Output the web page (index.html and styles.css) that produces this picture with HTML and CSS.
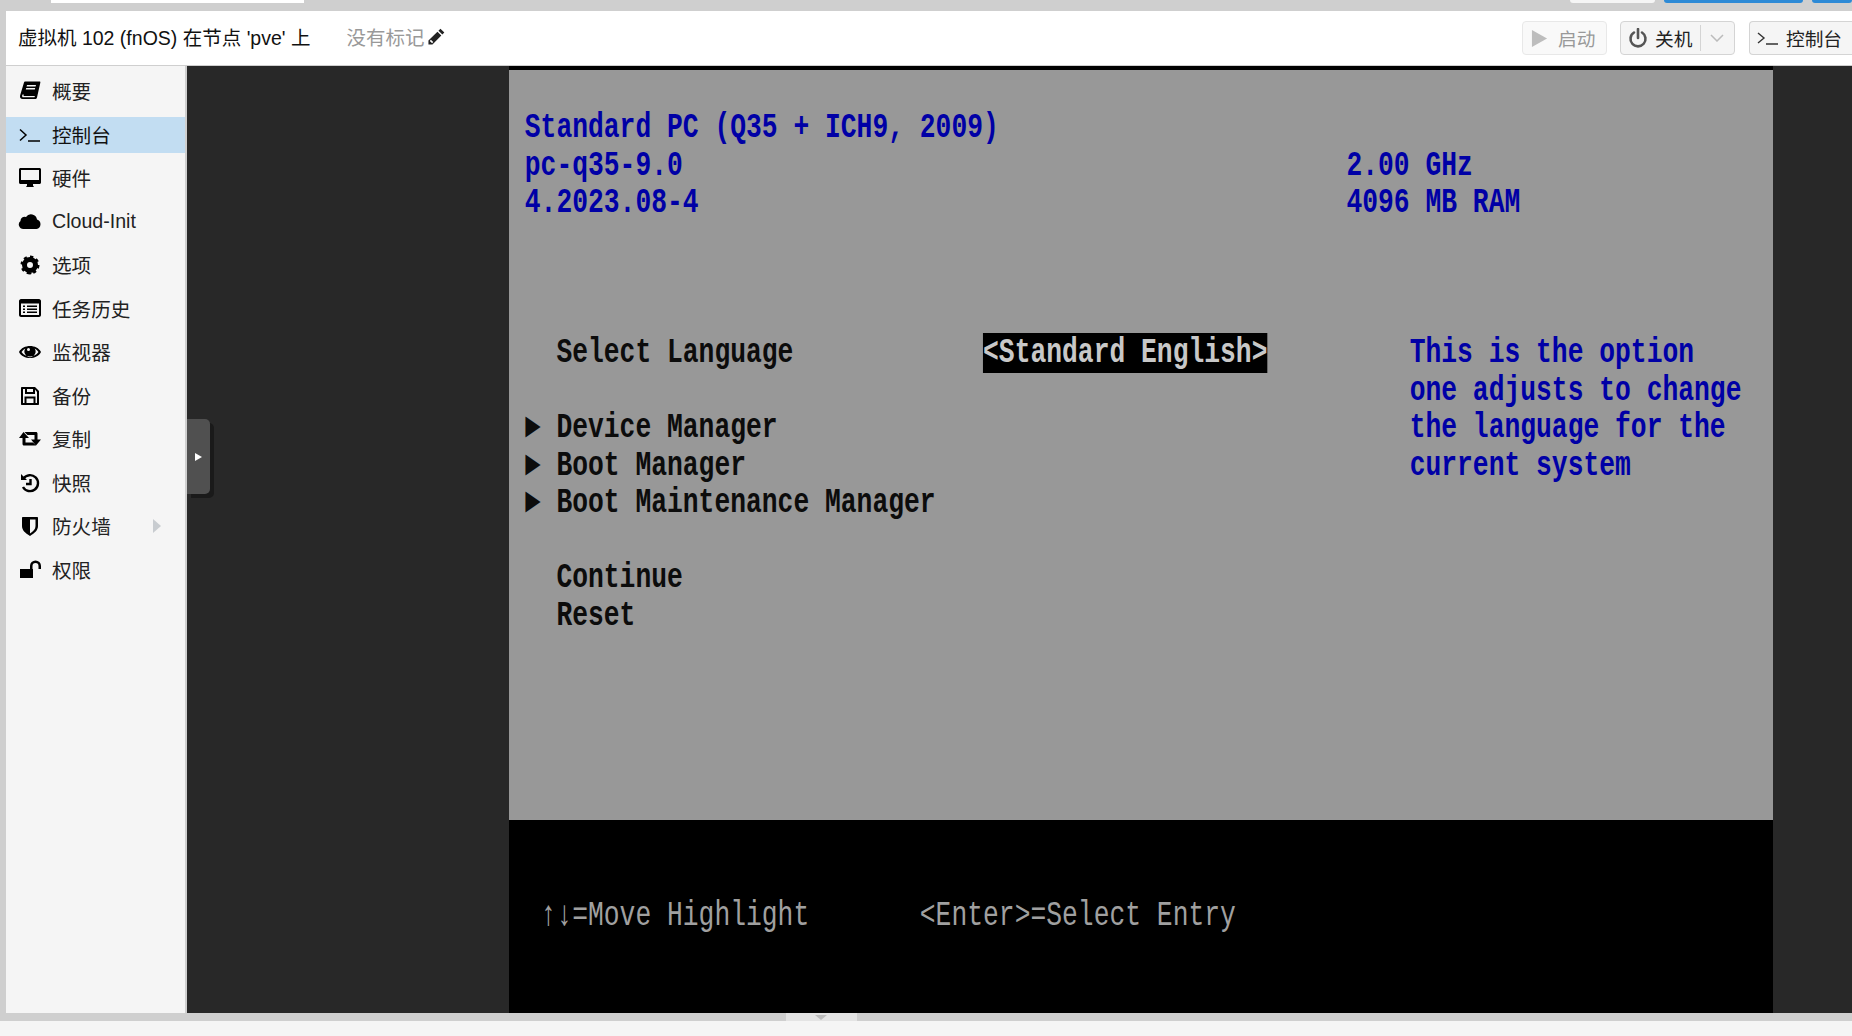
FILE: index.html
```html
<!DOCTYPE html>
<html lang="zh">
<head>
<meta charset="utf-8">
<title>虚拟机 102 (fnOS)</title>
<link rel="stylesheet" href="styles.css">
</head>
<body>
<div class="app">
  <div class="topstrip">
    <div class="tab"></div>
    <div class="strip-right">
      <div class="strip-btn strip-white"></div>
      <div class="strip-btn strip-blue"></div>
      <div class="strip-btn strip-blue2"></div>
    </div>
  </div>
  <div class="panel">
    <header class="head">
      <div class="title">虚拟机 102 (fnOS) 在节点 'pve' 上</div>
      <div class="tags">没有标记<svg class="pencil" viewBox="0 0 18 18"><path d="M13 1.500l3.500 3.500-1.800 1.800-3.500-3.500zM10.300 4.200l3.500 3.500-8 8H2.200v-3.500zM3.400 12.500l2.100 2.100 1-1-2.100-2.100z" fill-rule="evenodd"/></svg></div>
      <div class="spacer"></div>
      <div class="btn btn-off"><svg class="ic-play" viewBox="0 0 18 18"><path d="M1 0l16 9-16 9z"/></svg><span>启动</span></div>
      <div class="btn btn-split"><svg class="ic-power" viewBox="0 0 20 20"><path d="M6 4.500a7.500 7.500 0 1 0 8 0" /><path d="M10 1v9"/></svg><span>关机</span><i class="sep"></i><svg class="ic-chev" viewBox="0 0 14 8"><path d="M1 1l6 6 6-6"/></svg></div>
      <div class="btn btn-last"><svg class="ic-term" viewBox="0 0 24 24"><path d="M2 7l6 5-6 5M10 18h12"/></svg><span>控制台</span></div>
    </header>
    <div class="body">
      <nav class="side">
        <div class="item"><svg class="ic" viewBox="0 0 24 24"><path fill-rule="evenodd" d="M7 2.500h14.500c.8 0 1 .6.8 1.200L19 18.500c-.3 1-1 1.500-2 1.500H4.500C3 20 2 19 2 17.500c0-.6.100-1.200.3-1.800L6 3.500c.2-.6.500-1 1-1zM9 6l-.4 1.500h9L18 6zM8.200 9l-.4 1.500h9l.4-1.500zM4.800 15.500c-.8 0-1 2.800.2 2.800h11.500l.4-1.300H6c-.6 0-.6-1.500 0-1.500z"/></svg><span>概要</span></div>
        <div class="item active"><svg class="ic ic-line" viewBox="0 0 24 24"><path d="M2 6.500l6 5.500-6 5.500M10 18h12"/></svg><span>控制台</span></div>
        <div class="item"><svg class="ic" viewBox="0 0 24 24"><path fill-rule="evenodd" d="M2.500 2h19c.8 0 1.500.7 1.500 1.500v13c0 .8-.7 1.500-1.500 1.500H15v1.500l1 1.500H8l1-1.500V18H2.500C1.700 18 1 17.300 1 16.500v-13C1 2.700 1.700 2 2.500 2zM3 4v10h18V4z"/></svg><span>硬件</span></div>
        <div class="item"><svg class="ic" viewBox="0 0 24 24"><path d="M5.500 19A4.500 4.500 0 0 1 2.500 11 4 4 0 0 1 8 7 6 6 0 0 1 19 9.500 4.900 4.900 0 0 1 18.500 19Z"/></svg><span>Cloud-Init</span></div>
        <div class="item"><svg class="ic ic-gear" viewBox="0 0 24 24"><circle class="g1" cx="12" cy="12" r="5.500"/><circle class="g2" cx="12" cy="12" r="7.500" pathLength="16"/></svg><span>选项</span></div>
        <div class="item"><svg class="ic" viewBox="0 0 24 24"><path fill-rule="evenodd" d="M3 2h18c1 0 2 1 2 2v14c0 1-1 2-2 2H3c-1 0-2-1-2-2V4c0-1 1-2 2-2zM3 6.500V18h18V6.500zM5 8.500h2V10H5zM9 8.500h10V10H9zM5 11.500h2V13H5zM9 11.500h10V13H9zM5 14.500h2V16H5zM9 14.500h10V16H9z"/></svg><span>任务历史</span></div>
        <div class="item"><svg class="ic" viewBox="0 0 24 24"><path fill-rule="evenodd" d="M1 12C5 4 19 4 23 12 19 20 5 20 1 12zM3.500 12c2 2.800 5 4.500 8.500 4.500s6.500-1.700 8.500-4.500c-1-1.400-2.300-2.600-3.800-3.400a5.500 5.500 0 1 1-9.400 0C5.800 9.400 4.500 10.600 3.500 12zM10.500 8a1.500 1.500 0 1 0 0 3 1.500 1.500 0 0 0 0-3z"/></svg><span>监视器</span></div>
        <div class="item"><svg class="ic" viewBox="0 0 24 24"><path fill-rule="evenodd" d="M4 3h13l4 4v13c0 .6-.4 1-1 1H4c-.6 0-1-.4-1-1V4c0-.6.400-1 1-1zM5 5v14h1.500v-6.500h11V19H19V8l-2-2.500V10H7V5zM8.500 14.500V19h7v-4.500zM9 5v3h6V5z"/></svg><span>备份</span></div>
        <div class="item"><svg class="ic" viewBox="0 0 24 24"><path d="M5.500 5l5.500 6H7.500v4.500H15l3 3H6c-.8 0-1.500-.7-1.500-1.500v-6H1zM6.500 5H18c.8 0 1.500.7 1.500 1.500V12.500H23l-5 6-5-6h3.500V8H9.500z"/></svg><span>复制</span></div>
        <div class="item"><svg class="ic ic-hist" viewBox="0 0 24 24"><path d="M5.500 7.500A8 8 0 1 1 5 16"/><path d="M12.500 8v5H8"/><path class="fill" d="M3 3l6 6H3z"/></svg><span>快照</span></div>
        <div class="item has-arrow"><svg class="ic" viewBox="0 0 24 24"><path fill-rule="evenodd" d="M5 3h14c.6 0 1 .4 1 1v8c0 4-3 7-8 10-5-3-8-6-8-10V4c0-.6.400-1 1-1zM12 5.500v14c3.500-2.200 5.500-4.500 5.500-7.500V5.500z"/></svg><span>防火墙</span><i class="more"></i></div>
        <div class="item"><svg class="ic" viewBox="0 0 24 24"><path fill-rule="evenodd" d="M2 11h10V8a5.500 5.500 0 0 1 11 0v3h-2.500V8a3 3 0 0 0-6 0v3h.5v9H2z"/></svg><span>权限</span></div>
      </nav>
      <main class="view">
        <div class="handle"><i class="handle-arrow"></i></div>
        <div class="screen">
          <div class="upper"></div>
          <pre class="term"><span class="bl"> Standard PC (Q35 + ICH9, 2009)</span>
<span class="bl"> pc-q35-9.0                                          2.00 GHz</span>
<span class="bl"> 4.2023.08-4                                         4096 MB RAM</span>



   Select Language            <span class="hl">&lt;Standard English&gt;</span>         <span class="bl">This is the option</span>
                                                         <span class="bl">one adjusts to change</span>
 ► Device Manager                                        <span class="bl">the language for the</span>
 ► Boot Manager                                          <span class="bl">current system</span>
 ► Boot Maintenance Manager

   Continue
   Reset







<span class="gr">  ↑↓=Move Highlight       &lt;Enter&gt;=Select Entry</span></pre>
        </div>
      </main>
    </div>
  </div>
  <div class="splitter"><div class="splitter-tab"><i class="splitter-arrow"></i></div></div>
  <div class="bottom"></div>
</div>
</body>
</html>
```
FILE: styles.css
```css
* { box-sizing: border-box; }
html, body { margin: 0; height: 100%; overflow: hidden; }
body {
  background: #cfcfcf;
  font-family: "Liberation Sans", "Noto Sans CJK SC", sans-serif;
  color: #000;
}
.app { display: flex; flex-direction: column; height: 1036px; }

.topstrip { height: 11px; display: flex; flex: none; padding-left: 51px; }
.tab { width: 253px; height: 3px; background: #fff; }
.strip-right { margin-left: auto; display: flex; gap: 9px; }
.strip-btn { height: 3px; border-radius: 0 0 3px 3px; }
.strip-white { width: 85px; background: #f5f5f5; }
.strip-blue { width: 139px; background: #2d8ad6; }
.strip-blue2 { width: 40px; background: #2d8ad6; }

.panel { flex: 1; min-height: 0; margin-left: 6px; display: flex; flex-direction: column; }

.head {
  height: 55px; flex: none; background: #fff; border-bottom: 1px solid #cfcfcf;
  display: flex; align-items: center; padding: 0 0 0 12px;
  font-size: 19.500px;
}
.title { color: #111; white-space: nowrap; margin-top: -3px; }
.tags { margin-left: 36px; color: #999; display: flex; align-items: center; white-space: nowrap; margin-top: -3px; }
.pencil { width: 20px; height: 20px; margin-left: 2px; fill: #222; }
.spacer { flex: 1; }

.btn {
  height: 34px; display: flex; align-items: center; border: 1px solid #d4d4d4;
  border-radius: 4px; background: #f5f5f5; white-space: nowrap; margin-top: 0; font-size: 18.700px;
}
.btn span { margin-top: -2px; margin-left: -1px; }
.btn-off { width: 85px; padding-left: 8px; background: #f9f9f9; border-color: #e8e8e8; color: #999; margin-right: 13px; }
.ic-play { width: 17px; height: 17px; fill: #bdbdbd; margin-right: 11px; }
.btn-split { width: 115px; padding-left: 7px; margin-right: 14px; color: #222; }
.ic-power { width: 20px; height: 20px; fill: none; stroke: #555; stroke-width: 2.600; stroke-linecap: round; margin-right: 8px; }
.sep { width: 1px; height: 26px; background: #d4d4d4; margin: 0 9px 0 8px; }
.ic-chev { width: 14px; height: 8px; fill: none; stroke: #bbb; stroke-width: 1.500; }
.btn-last { width: 103px; padding-left: 6px; color: #222; border-right: 0; border-radius: 4px 0 0 4px; }
.ic-term { width: 24px; height: 24px; fill: none; stroke: #333; stroke-width: 1.400; margin-right: 7px; }

.body { flex: 1; min-height: 0; display: flex; }

.side {
  width: 181px; flex: none; background: #f5f5f5; border-right: 2px solid #cfcfcf;
  padding-top: 7px; display: flex; flex-direction: column; gap: 7.500px;
  font-size: 19.600px;
}
.item { height: 36px; flex: none; display: flex; align-items: center; padding-left: 12px; color: #222; white-space: nowrap; }
.item.active { background: #c2ddf2; color: #111; }
.item span { margin-left: 10px; margin-top: -1px; }
.ic { width: 24px; height: 24px; flex: none; fill: #000; }
.ic-line { fill: none; stroke: #000; stroke-width: 1.500; }
.ic-gear { fill: none; }
.g1 { fill: none; stroke: #000; stroke-width: 5; }
.g2 { fill: none; stroke: #000; stroke-width: 4; stroke-dasharray: 1 1; }
.ic-hist { fill: none; stroke: #000; stroke-width: 2.400; }
.ic-hist .fill { fill: #000; stroke: none; }
.more {
  width: 0; height: 0; margin-left: 42px;
  border-left: 8px solid #c8ccd0; border-top: 7px solid transparent; border-bottom: 7px solid transparent;
}

.view { flex: 1; min-width: 0; background: #282828; position: relative; overflow: hidden; display: flex; justify-content: center; }
.handle {
  position: absolute; left: 0; top: 353px; width: 23px; height: 75px;
  background: #505050; border-radius: 0 5px 5px 0; box-shadow: 4px 4px 0 #1a1a1a;
  display: flex; align-items: center; justify-content: center;
}
.handle-arrow { width: 0; height: 0; border-left: 7px solid #fff; border-top: 4px solid transparent; border-bottom: 4px solid transparent; }

.screen {
  position: absolute; left: 322px; top: 0; width: 1264px; height: 947px;
  background: #000; overflow: hidden;
}
.upper { position: absolute; left: 0; right: 0; top: 4px; height: 750px; background: #989898; }
.term {
  position: relative; margin: 0 0 0 -.5px; padding-top: 44px; width: 1680px;
  transform: scaleX(.7523); transform-origin: left top;
  font-family: "Liberation Mono", monospace; font-weight: 700; font-size: 35px; line-height: 37.500px;
  color: #0c0c0c; white-space: pre;
}
.bl { color: #0000a6; }
.hl { background: #000; color: #c8c8c8; }
.gr { color: #a0a0a0; font-weight: 400; }

.splitter { height: 8px; flex: none; background: #cfcfcf; display: flex; justify-content: center; padding-right: 210px; }
.splitter-tab { width: 71px; background: #e4e4e4; display: flex; justify-content: center; }
.splitter-arrow { width: 0; height: 0; border-top: 5px solid #bbb; border-left: 6px solid transparent; border-right: 6px solid transparent; margin-top: 2px; }
.bottom { height: 15px; flex: none; background: #f5f5f5; }
```
